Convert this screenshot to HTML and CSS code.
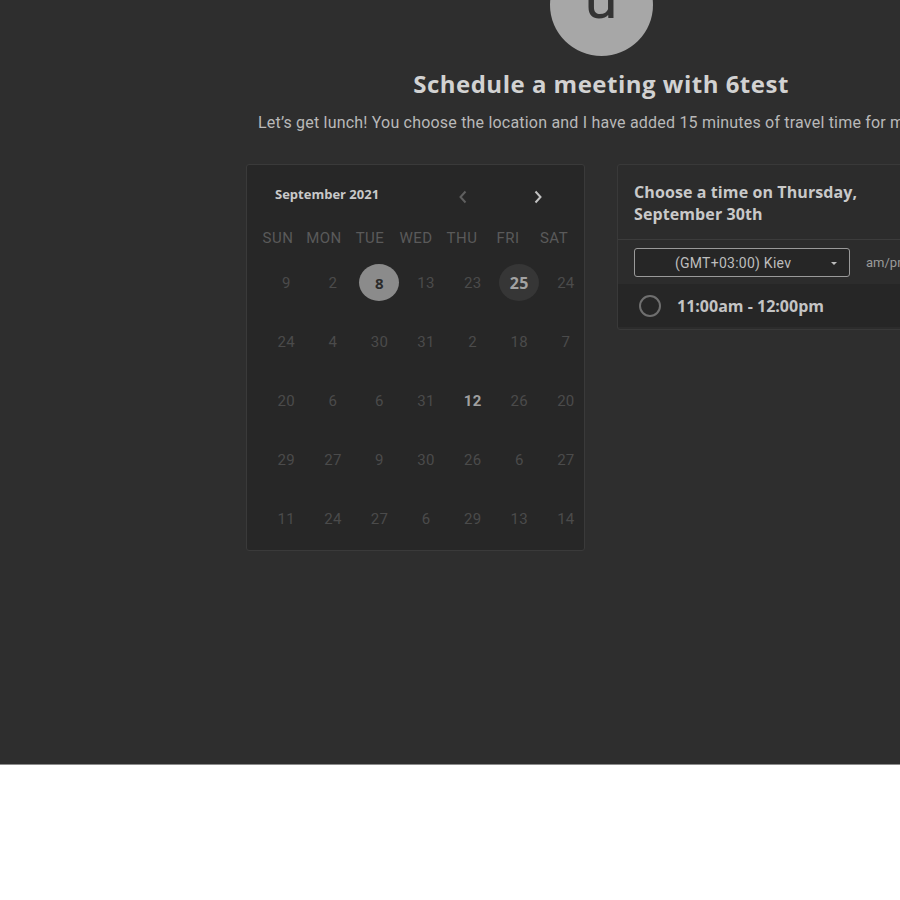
FILE: index.html
```
<!DOCTYPE html>
<html>
<head>
<meta charset="utf-8">
<link rel="stylesheet" href="styles.css">
</head>
<body>
<div class="stage">
  <div class="wrap">
    <div class="avatar"><span>u</span></div>
    <h1 class="title">Schedule a meeting with 6test</h1>
    <p class="subtitle">Let’s get lunch! You choose the location and I have added 15 minutes of travel time for me to get there.</p>
    <div class="columns">
      <div class="calendar">
        <div class="cal-head">
          <span class="month">September 2021</span>
          <span class="nav prev"><svg width="10" height="14" viewBox="0 0 10 14"><path d="M7.5 1.5 L2.5 7 L7.5 12.5" fill="none" stroke="currentColor" stroke-width="2"/></svg></span>
          <span class="nav next"><svg width="10" height="14" viewBox="0 0 10 14"><path d="M2.5 1.5 L7.5 7 L2.5 12.5" fill="none" stroke="currentColor" stroke-width="2"/></svg></span>
        </div>
        <div class="weekdays">
          <span>SUN</span><span>MON</span><span>TUE</span><span>WED</span><span>THU</span><span>FRI</span><span>SAT</span>
        </div>
        <div class="days">
          <span>9</span><span>2</span><span class="sel"><b>8</b></span><span>13</span><span>23</span><span class="today"><b>25</b></span><span>24</span>
          <span>24</span><span>4</span><span>30</span><span>31</span><span>2</span><span>18</span><span>7</span>
          <span>20</span><span>6</span><span>6</span><span>31</span><span class="avail">12</span><span>26</span><span>20</span>
          <span>29</span><span>27</span><span>9</span><span>30</span><span>26</span><span>6</span><span>27</span>
          <span>11</span><span>24</span><span>27</span><span>6</span><span>29</span><span>13</span><span>14</span>
        </div>
      </div>
      <div class="times">
        <div class="times-head">Choose a time on Thursday,<br>September 30th</div>
        <div class="tz-row">
          <div class="select"><span>(GMT+03:00) Kiev</span><i class="caret"></i></div>
          <span class="ampm">am/pm</span>
        </div>
        <div class="slot"><i class="radio"></i><span>11:00am - 12:00pm</span></div>
      </div>
    </div>
  </div>
</div>
</body>
</html>
```
FILE: styles.css
```
html, body {
  margin: 0;
  padding: 0;
  background: #ffffff;
  overflow: hidden;
}
.stage {
  height: 764px;
  background: #2e2e2e;
  border-bottom: 1px solid #8c8c8c;
  overflow: hidden;
  width: 900px;
}
.wrap {
  width: 710px;
  margin-left: 246px;
  display: flex;
  flex-direction: column;
  align-items: center;
}
.avatar {
  width: 103px;
  height: 102px;
  border-radius: 50%;
  background: #a7a7a7;
  margin-top: -46px;
  display: flex;
  justify-content: center;
  align-items: flex-end;
}
.avatar span {
  font-family: Roboto, sans-serif;
  font-size: 60px;
  color: #343434;
  line-height: 1;
  margin-bottom: 28px;
}
.title {
  font-family: "Open Sans", sans-serif;
  font-weight: 700;
  font-size: 24px;
  color: #d2d2d2;
  margin: 13px 0 0;
  line-height: 30px;
  letter-spacing: 0.5px;
  white-space: nowrap;
}
.subtitle {
  align-self: flex-start;
  margin: 14px 0 0 12px;
  font-family: Roboto, sans-serif;
  font-size: 16px;
  letter-spacing: 0.2px;
  line-height: 20px;
  color: #b9b9b9;
  white-space: nowrap;
}
.columns {
  align-self: stretch;
  display: flex;
  gap: 32px;
  margin-top: 31px;
}
.calendar {
  width: 339px;
  height: 387px;
  box-sizing: border-box;
  background: #272727;
  border: 1px solid #3a3a3a;
  border-radius: 3px;
  padding: 18px 0 0 8px;
}
.cal-head {
  height: 22px;
  display: flex;
  align-items: center;
}
.month {
  font-family: "Open Sans", sans-serif;
  font-weight: 700;
  font-size: 13px;
  color: #c9c9c9;
  margin-left: 20px;
  width: 184px;
  white-space: nowrap;
}
.nav {
  display: flex;
  margin-top: 6px;
}
.prev { color: #5f5f5f; margin-left: -1px; }
.next { color: #c2c2c2; margin-left: 65px; }
.weekdays {
  margin-top: 23px;
  display: grid;
  grid-template-columns: repeat(7, 46px);
  height: 20px;
  align-items: center;
}
.weekdays span {
  text-align: center;
  font-family: Roboto, sans-serif;
  font-size: 15px;
  letter-spacing: 0.5px;
  color: #5a5a5a;
}
.days {
  margin: 5px 0 0 8px;
  display: grid;
  grid-template-columns: repeat(7, 46.6px);
  grid-auto-rows: 59px;
  align-items: center;
  justify-items: center;
}
.days span {
  font-family: Roboto, sans-serif;
  font-size: 15px;
  letter-spacing: 0.3px;
  color: #4b4b4b;
  width: 40px;
  height: 37px;
  border-radius: 50%;
  display: flex;
  align-items: center;
  justify-content: center;
}
.days b {
  font-family: "Open Sans", sans-serif;
  font-weight: 700;
}
.days .sel {
  background: #8b8b8b;
  color: #2b2b2b;
}
.days .today {
  background: #363636;
  color: #a3a3a3;
  font-size: 16px;
}
.days .avail {
  color: #a0a0a0;
  font-weight: 700;
}
.times {
  width: 340px;
  flex-shrink: 0;
  height: 166px;
  box-sizing: border-box;
  border: 1px solid #393939;
  border-radius: 3px;
  background: #2c2c2c;
}
.times-head {
  padding: 16px 16px 14px;
  font-family: "Open Sans", sans-serif;
  font-weight: 700;
  font-size: 16px;
  letter-spacing: 0.1px;
  line-height: 22px;
  color: #c9c9c9;
  border-bottom: 1px solid #3c3c3c;
  white-space: nowrap;
}
.tz-row {
  height: 44px;
  display: flex;
  align-items: center;
  padding-left: 16px;
}
.select {
  width: 216px;
  height: 29px;
  box-sizing: border-box;
  border: 1px solid #9a9a9a;
  border-radius: 3px;
  background: #262626;
  display: flex;
  align-items: center;
  padding-left: 40px;
  position: relative;
  margin-top: 1px;
}
.select span {
  font-family: Roboto, sans-serif;
  font-size: 14px;
  letter-spacing: 0.25px;
  color: #bdbdbd;
}
.caret {
  position: absolute;
  right: 12px;
  top: 13px;
  border-left: 3.5px solid transparent;
  border-right: 3.5px solid transparent;
  border-top: 3.5px solid #bdbdbd;
}
.ampm {
  margin-left: 16px;
  font-family: Roboto, sans-serif;
  font-size: 13px;
  color: #9a9a9a;
}
.slot {
  height: 43px;
  background: #262626;
  display: flex;
  align-items: center;
  padding-left: 21px;
}
.radio {
  width: 22px;
  height: 22px;
  box-sizing: border-box;
  border: 2px solid #6f6f6f;
  border-radius: 50%;
}
.slot span {
  margin-left: 16px;
  font-family: "Open Sans", sans-serif;
  font-weight: 700;
  font-size: 16px;
  color: #c4c4c4;
}
```
